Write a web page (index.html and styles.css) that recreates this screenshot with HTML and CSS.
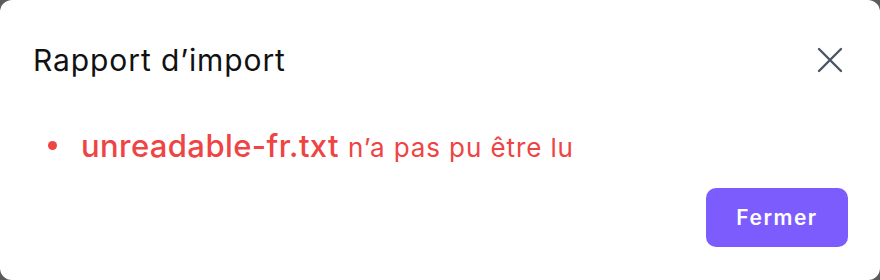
FILE: index.html
```html
<!DOCTYPE html>
<html lang="fr">
  <head>
    <meta charset="UTF-8" />
    <meta name="viewport" content="width=device-width, initial-scale=1.0" />
    <title>Rapport d'import</title>
    <link rel="stylesheet" href="styles.css">
  </head>
  <body>
    <div class="modal">
      <header class="modal-header">
        <h2 class="modal-title">Rapport d’import</h2>
        <button class="close-btn" aria-label="Fermer">
          <svg width="32" height="32" viewBox="0 0 32 32" fill="none" stroke="currentColor" stroke-width="2.4" stroke-linecap="round">
            <path d="M5 5L27 27M27 5L5 27" />
          </svg>
        </button>
      </header>

      <ul class="error-list">
        <li><strong>unreadable-fr.txt</strong> n’a pas pu être lu</li>
      </ul>

      <footer class="modal-footer">
        <button class="primary-btn">Fermer</button>
      </footer>
    </div>
  </body>
</html>
```

FILE: styles.css
```css
* {
  margin: 0;
  padding: 0;
  box-sizing: border-box;
}

body {
  background-color: #5b5b5b;
  font-family: Inter, "Noto Sans", sans-serif;
  width: 880px;
  height: 280px;
  overflow: hidden;
}

.modal {
  width: 880px;
  height: 280px;
  background-color: white;
  border-radius: 12px;
  padding: 33px 32px 33px 33px;
  display: flex;
  flex-direction: column;
}

.modal-header {
  display: flex;
  justify-content: space-between;
  align-items: center;
  height: 54px;
}

.modal-title {
  font-size: 30px;
  font-weight: 400;
  letter-spacing: 0.9px;
  color: #111;
}

.close-btn {
  background: none;
  border: none;
  color: #4b5563;
  display: flex;
  margin-right: 2px;
}

.error-list {
  list-style: none;
  margin-top: 40px;
  color: #ef4444;
  font-size: 26px;
  letter-spacing: 0.9px;
}

.error-list li {
  display: flex;
  align-items: baseline;
}

.error-list li::before {
  content: "";
  flex-shrink: 0;
  width: 9px;
  height: 9px;
  border-radius: 50%;
  background-color: #ef4444;
  margin: 0 24px 0 15px;
  align-self: center;
}

.error-list strong {
  font-size: 31px;
  font-weight: 500;
  letter-spacing: 0.4px;
  margin-right: 9px;
}

.modal-footer {
  display: flex;
  justify-content: flex-end;
  margin-top: auto;
}

.primary-btn {
  background-color: #7c5cfc;
  color: white;
  border: none;
  border-radius: 10px;
  font-family: inherit;
  font-size: 21px;
  font-weight: 600;
  letter-spacing: 1.5px;
  width: 142px;
  height: 59px;
}
```
